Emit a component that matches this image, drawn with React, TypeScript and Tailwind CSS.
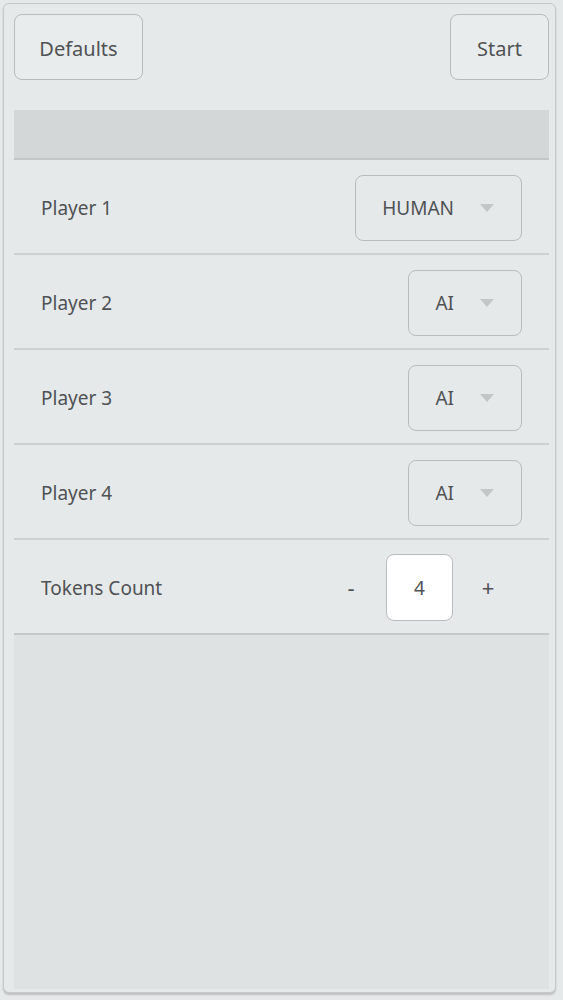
const font = { fontFamily: '"Noto Sans", "Open Sans", sans-serif' };

const Caret = () => (
  <svg width="14" height="8" viewBox="0 0 14 8" className="shrink-0">
    <path d="M0 0 H14 L7 8 Z" fill="#c3c6c7" />
  </svg>
);

const Select = ({ value }: { value: string }) => (
  <div className="h-[66px] flex items-center gap-[26px] pl-[26px] pr-[27px] border border-[#b9bcbd] rounded-lg bg-[#e6e9ea] text-[19px] text-[#4f5254]">
    <span className="translate-y-[1px]">{value}</span>
    <Caret />
  </div>
);

const players = [
  { name: "Player 1", type: "HUMAN" },
  { name: "Player 2", type: "AI" },
  { name: "Player 3", type: "AI" },
  { name: "Player 4", type: "AI" },
];

export default function App() {
  return (
    <div className="w-[563px] h-[1000px] bg-[#e6e9ea] pt-[3px] pl-[3px]" style={font}>
      <div className="w-[553px] h-[990px] flex flex-col border border-[#c6c9ca] rounded-md bg-[#e6e9ea] pt-[10px] pl-[10px] pr-[6px] pb-[3px] shadow-[0_2px_2px_rgba(0,0,0,0.18)]">
        <div className="flex justify-between">
          <button className="w-[129px] h-[66px] pt-[3px] border border-[#b8bbbc] rounded-lg bg-[#e9ecec] text-[20px] text-[#505355]">
            Defaults
          </button>
          <button className="w-[99px] h-[66px] pt-[3px] border border-[#b8bbbc] rounded-lg bg-[#e9ecec] text-[20px] text-[#505355]">
            Start
          </button>
        </div>

        <div className="mt-[30px] h-[50px] bg-[#d4d7d8] border-b-2 border-[#c3c6c7]" />

        {players.map((p) => (
          <div
            key={p.name}
            className="h-[95px] flex items-center justify-between pt-[2px] pl-[27px] pr-[27px] border-b-2 border-[#cdd0d1]"
          >
            <span className="translate-y-[1px] text-[19px] text-[#4f5254]">{p.name}</span>
            <Select value={p.type} />
          </div>
        ))}

        <div className="h-[95px] flex items-center justify-between pt-[2px] pl-[27px] pr-[44px] border-b-2 border-[#c6c9ca]">
          <span className="translate-y-[1px] text-[19px] text-[#4f5254]">Tokens Count</span>
          <div className="flex items-center gap-[18px] text-[#4f5254]">
            <span className="w-[34px] text-center text-[22px]">-</span>
            <div className="w-[67px] h-[67px] pt-[2px] flex items-center justify-center bg-white border border-[#b9bcbd] rounded-lg text-[19px]">
              4
            </div>
            <span className="w-[34px] text-center text-[22px]">+</span>
          </div>
        </div>

        <div className="flex-1 bg-[#dfe2e3]" />
      </div>
    </div>
  );
}
